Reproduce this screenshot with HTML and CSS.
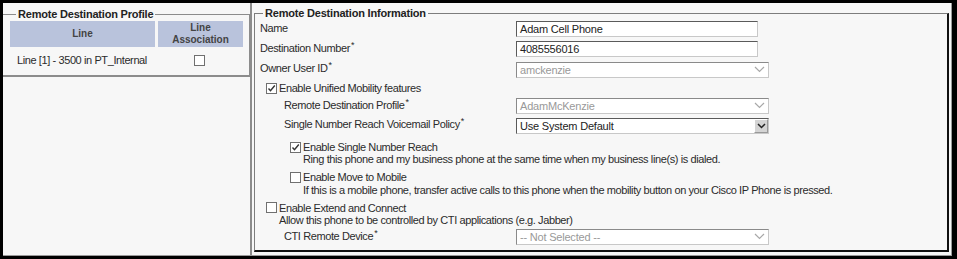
FILE: index.html
```html
<!DOCTYPE html>
<html lang="en">

<head>
  <meta charset="utf-8">
  <title>Remote Destination</title>
  <link rel="stylesheet" href="styles.css">
</head>

<body>
  <div class="frame">
    <div class="left">
      <fieldset class="box box-left">
        <legend>Remote Destination Profile</legend>
        <table class="lines">
          <tr>
            <th class="col-line">Line</th>
            <th class="col-assoc">Line<br>Association</th>
          </tr>
          <tr>
            <td>Line [1] - 3500 in PT_Internal</td>
            <td class="center"><span class="cb"></span></td>
          </tr>
        </table>
      </fieldset>
    </div>

    <div class="right">
      <fieldset class="box box-right">
        <legend>Remote Destination Information</legend>

        <div class="row r1">
          <span class="label">Name</span>
          <div class="input">Adam Cell Phone</div>
        </div>
        <div class="row r2">
          <span class="label">Destination Number<sup>*</sup></span>
          <div class="input">4085556016</div>
        </div>
        <div class="row r3">
          <span class="label">Owner User ID<sup>*</sup></span>
          <div class="select disabled">amckenzie
            <svg class="chev" width="11" height="7" viewBox="0 0 11 7"><path d="M1 1l4.5 4.5L10 1" fill="none" stroke="#a8a8a8" stroke-width="1.2"/></svg>
          </div>
        </div>

        <div class="check top r4">
          <span class="cb on"><svg width="9" height="9" viewBox="0 0 9 9"><path d="M1.5 4.5l2 2.2L7.8 1.5" fill="none" stroke="#333" stroke-width="1.4"/></svg></span>
          <span>Enable Unified Mobility features</span>
        </div>

        <div class="row sub r5">
          <span class="label">Remote Destination Profile<sup>*</sup></span>
          <div class="select disabled">AdamMcKenzie
            <svg class="chev" width="11" height="7" viewBox="0 0 11 7"><path d="M1 1l4.5 4.5L10 1" fill="none" stroke="#a8a8a8" stroke-width="1.2"/></svg>
          </div>
        </div>
        <div class="row sub r6">
          <span class="label">Single Number Reach Voicemail Policy<sup>*</sup></span>
          <div class="select">Use System Default
            <span class="btn"><svg width="9" height="6" viewBox="0 0 9 6"><path d="M1 1l3.5 3.5L8 1" fill="none" stroke="#222" stroke-width="1.5"/></svg></span>
          </div>
        </div>

        <div class="check nested r7">
          <span class="cb on"><svg width="9" height="9" viewBox="0 0 9 9"><path d="M1.5 4.5l2 2.2L7.8 1.5" fill="none" stroke="#333" stroke-width="1.4"/></svg></span>
          <span>Enable Single Number Reach</span>
        </div>
        <div class="desc nested-desc">Ring this phone and my business phone at the same time when my business line(s) is dialed.</div>

        <div class="check nested r8">
          <span class="cb"></span>
          <span>Enable Move to Mobile</span>
        </div>
        <div class="desc nested-desc d2">If this is a mobile phone, transfer active calls to this phone when the mobility button on your Cisco IP Phone is pressed.</div>

        <div class="check top r9">
          <span class="cb"></span>
          <span>Enable Extend and Connect</span>
        </div>
        <div class="desc top-desc">Allow this phone to be controlled by CTI applications (e.g. Jabber)</div>
        <div class="row sub r10">
          <span class="label">CTI Remote Device<sup>*</sup></span>
          <div class="select disabled">-- Not Selected --
            <svg class="chev" width="11" height="7" viewBox="0 0 11 7"><path d="M1 1l4.5 4.5L10 1" fill="none" stroke="#a8a8a8" stroke-width="1.2"/></svg>
          </div>
        </div>
      </fieldset>
    </div>
  </div>
</body>

</html>
```

FILE: styles.css
```css
html,
body {
  margin: 0;
  background-color: #000;
}

body {
  padding: 3px 5px 3px 3px;
  height: 259px;
  box-sizing: border-box;
  font-family: "Liberation Sans", Arial, sans-serif;
  font-size: 11px;
  letter-spacing: -0.4px;
  color: #2b2b2b;
}

.frame {
  display: flex;
  height: 100%;
  box-sizing: border-box;
  background-color: #f7f7f7;
  border-right: 1px solid #9a9a9a;
  border-bottom: 1px solid #9a9a9a;
}

.left {
  width: 247px;
  border-right: 2px solid #8c8c8c;
}

.right {
  flex: 1;
  padding: 4px 2px 3px 2px;
}

.box {
  margin: 0;
  box-sizing: border-box;
}

.box legend {
  font-weight: bold;
  font-size: 11px;
  letter-spacing: -0.2px;
  padding: 0 2px;
  color: #222;
}

.box-left {
  margin-top: 5px;
  height: 69px;
  border: 2px solid #8c8c8c;
  border-left: 0;
  border-top-width: 1px;
  padding: 0 6px 0 7px;
}

.box-left legend {
  margin-left: 6px;
}

.box-right {
  height: 100%;
  border: 1px solid #7d7d7d;
  border-right: 2px solid #111;
  border-bottom: 2px solid #111;
  padding: 0 0 0 5px;
}

.box-right legend {
  margin-left: 3px;
}

.lines {
  width: 233px;
  border-collapse: collapse;
  margin-top: 1px;
}

.lines th {
  background-color: #b9c3dc;
  color: #444;
  font-size: 10px;
  font-weight: bold;
  letter-spacing: 0;
  height: 26px;
  padding: 0;
  line-height: 12px;
}

.col-line {
  width: 145px;
  border-right: 3px solid #f7f7f7;
}

.lines td {
  padding: 6px 0 0 7px;
  height: 14px;
  white-space: nowrap;
}

.lines td.center {
  text-align: center;
  padding-left: 0;
}

.cb {
  display: inline-flex;
  justify-content: center;
  align-items: center;
  flex: none;
  width: 11px;
  height: 11px;
  box-sizing: border-box;
  border: 1px solid #707070;
  background-color: #fff;
  vertical-align: middle;
}

.row {
  display: flex;
  align-items: center;
  height: 20px;
}

.row .label {
  width: 256px;
  margin-top: -3px;
}

.row.sub .label {
  width: 232px;
  padding-left: 24px;
}

.r3 {
  height: 21px;
}

.r6 {
  height: 19px;
}

sup {
  font-size: 9px;
  line-height: 0;
  vertical-align: 4px;
  margin-left: 1px;
}

.input,
.select {
  box-sizing: border-box;
  height: 16px;
  border: 1px solid #c8c8c8;
  border-top-color: #5a5a5a;
  border-left-color: #5a5a5a;
  background-color: #fff;
  padding: 0 3px;
  line-height: 14px;
  color: #222;
  letter-spacing: -0.2px;
}

.input {
  width: 242px;
}

.select {
  width: 253px;
  position: relative;
}

.select.disabled {
  color: #999;
  border-top-color: #8a8a8a;
  border-left-color: #8a8a8a;
}

.chev {
  position: absolute;
  right: 3px;
  top: 3px;
}

.btn {
  position: absolute;
  right: 0;
  top: 0;
  width: 14px;
  height: 14px;
  background-color: #d4d4d4;
  border: 1px solid #999;
  border-top-color: #fff;
  border-left-color: #fff;
  box-sizing: border-box;
  display: flex;
  justify-content: center;
  align-items: center;
}

.check {
  display: flex;
  align-items: center;
  gap: 2px;
  height: 12px;
}

.check.top {
  padding-left: 6px;
}

.check.nested {
  padding-left: 30px;
}

.r4 {
  height: 16px;
  margin-top: 0;
}

.r7 {
  margin-top: 6px;
}

.r8 {
  margin-top: 5px;
}

.r9 {
  height: 13px;
  margin-top: 4px;
}

.desc {
  height: 13px;
  line-height: 13px;
}

.d2 {
  margin-top: 1px;
}

.nested-desc {
  padding-left: 43px;
}

.top-desc {
  padding-left: 19px;
}
```
